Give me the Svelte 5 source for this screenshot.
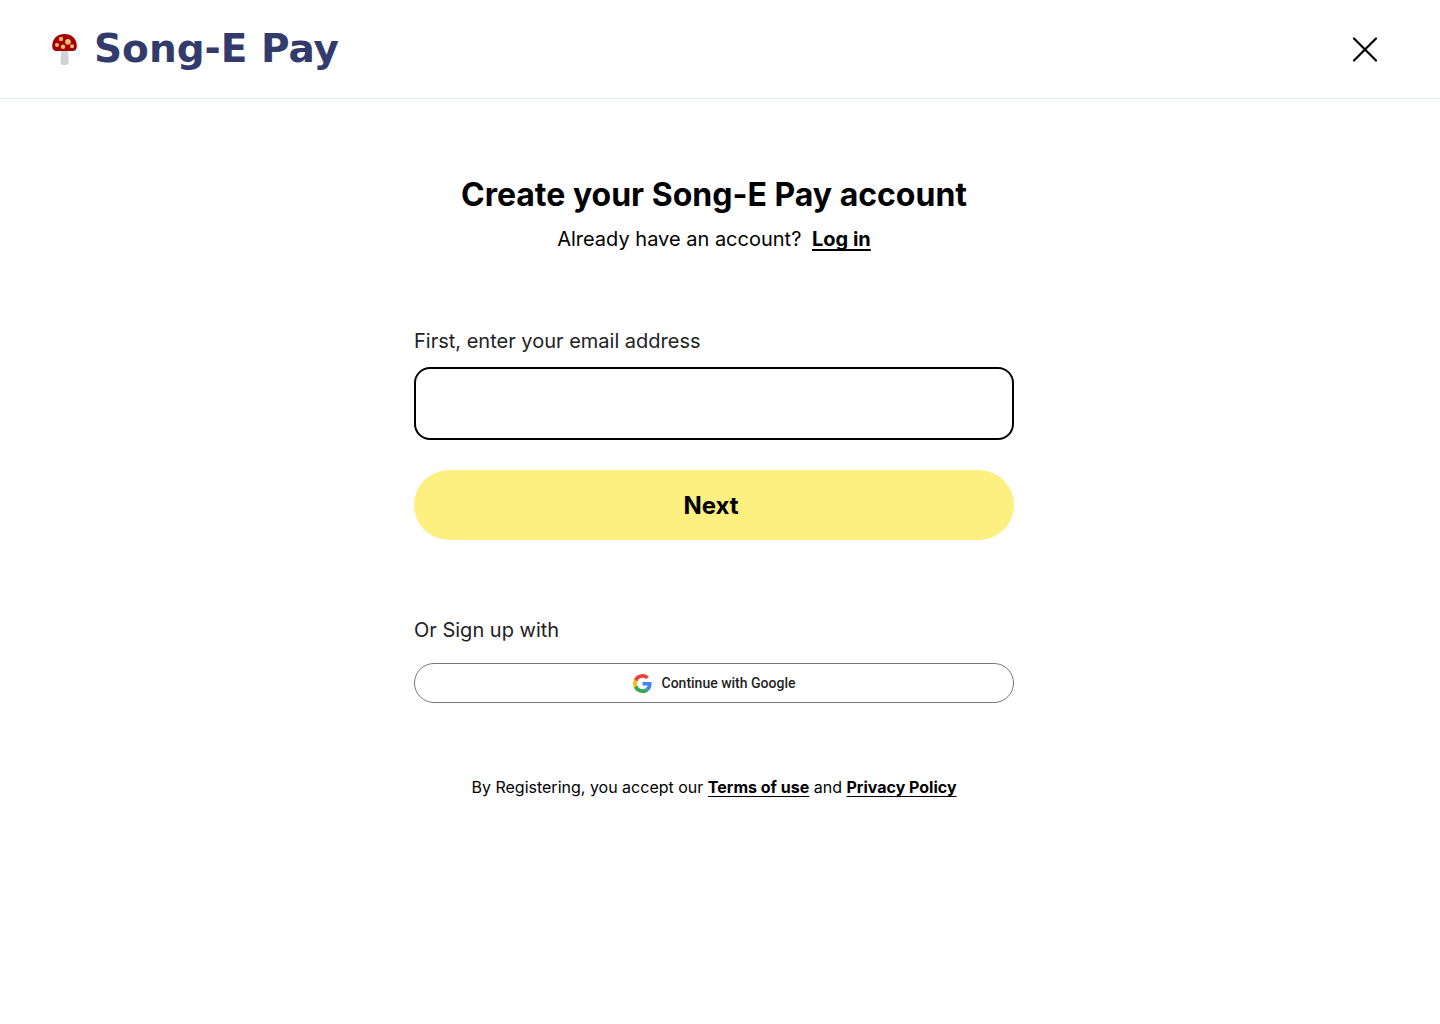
<script>
  let email = $state('');
</script>

<div class="page">
  <header>
    <a class="brand" href="#home">
      <svg class="mushroom" viewBox="0 0 26 34" aria-hidden="true">
        <path d="M9.500 17h6.200l1 12q.2 4-2.700 4h-2.800q-2.900 0-2.700-4z" fill="#d2d2d2" />
        <path d="M.2 14C.2 6.700 5.500 2 12.500 2s12.300 4.700 12.300 12c0 3-1.300 4.900-3.500 4.900H3.700C1.500 18.900.2 17 .2 14z" fill="#a30000" />
        <g fill="#ffb871">
          <circle cx="9" cy="7" r="2.200" /><circle cx="16" cy="9.800" r="2.900" />
          <circle cx="5" cy="13" r="2" /><circle cx="11" cy="14.800" r="2.200" />
          <circle cx="20" cy="14.200" r="2" />
        </g>
      </svg>
      <span>Song-E Pay</span>
    </a>
    <button class="close" type="button" aria-label="Close">
      <svg viewBox="0 0 26 26" aria-hidden="true"><path d="M2 2.500l22 22M24 2.500l-22 22" /></svg>
    </button>
  </header>

  <div class="content">
    <main>
      <h1>Create your Song-E Pay account</h1>
      <p class="login">Already have an account? <a href="#login">Log in</a></p>

      <form onsubmit={(event) => event.preventDefault()}>
        <label for="email">First, enter your email address</label>
        <input id="email" type="email" bind:value={email} />
        <button class="next" type="submit">Next</button>
      </form>

      <p class="alternative">Or Sign up with</p>
      <button class="google" type="button">
        <svg viewBox="0 0 48 48" aria-hidden="true">
          <path fill="#ea4335" d="M24 9.500c3.540 0 6.710 1.220 9.210 3.600l6.850-6.850C35.900 2.380 30.470 0 24 0 14.620 0 6.510 5.380 2.560 13.220l7.980 6.190C12.430 13.720 17.740 9.500 24 9.500z" />
          <path fill="#4285f4" d="M46.980 24.550c0-1.570-.15-3.090-.38-4.550H24v9.020h12.940c-.58 2.960-2.260 5.480-4.780 7.180l7.730 6c4.510-4.180 7.090-10.360 7.090-17.650z" />
          <path fill="#fbbc05" d="M10.530 28.590c-.48-1.450-.76-2.990-.76-4.590s.27-3.140.76-4.590l-7.980-6.190C.92 16.460 0 20.120 0 24s.92 7.540 2.560 10.780l7.970-6.190z" />
          <path fill="#34a853" d="M24 48c6.480 0 11.930-2.130 15.890-5.810l-7.730-6c-2.150 1.450-4.920 2.300-8.160 2.300-6.260 0-11.570-4.220-13.470-9.910l-7.980 6.190C6.510 42.620 14.620 48 24 48z" />
        </svg>
        <span>Continue with Google</span>
      </button>

      <p class="legal">By Registering, you accept our <a href="#terms">Terms of use</a> and <a href="#privacy">Privacy Policy</a></p>
    </main>
  </div>
</div>

<style>
  :global(body) { margin: 0; background: #fff; }
  .page { font-family: Inter, 'Liberation Sans', sans-serif; color: #000; }
  header {
    display: flex; align-items: center; justify-content: space-between;
    padding: 21px 62px 21px 52px; border-bottom: 1px solid #e1ebf1;
  }
  .brand {
    display: flex; align-items: center; gap: 16px; color: #323b6b;
    text-decoration: none; font: 700 39px/56px 'DejaVu Sans', sans-serif;
  }
  .mushroom { width: 26px; height: 34px; }
  button { font: inherit; color: inherit; cursor: pointer; padding: 0; }
  .close { display: flex; border: 0; background: none; }
  .close svg { width: 26px; height: 26px; fill: none; stroke: #000; stroke-width: 2.200; stroke-linecap: round; }
  .content { padding: 76px 12px 24px 0; }
  main { max-width: 600px; margin: 0 auto; }
  h1 { margin: 0; font-size: 32px; line-height: 40px; font-weight: 700; text-align: center; }
  p { margin: 0; }
  a { color: inherit; text-decoration-skip-ink: none; }
  .login { margin-top: 10px; font-size: 20px; line-height: 28px; text-align: center; }
  .login a { margin-left: 5px; text-underline-offset: 3px; }
  .login a, .legal a { font-weight: 700; }
  form { display: flex; flex-direction: column; margin-top: 74px; }
  label, .alternative { font-size: 20px; line-height: 28px; color: #222; }
  input {
    box-sizing: border-box; width: 100%; height: 73px; margin-top: 12px; padding: 0 20px;
    border: 2px solid #000; border-radius: 16px; background: #fff; font: 20px Inter, sans-serif; outline: none;
  }
  .next { height: 70px; margin-top: 30px; padding-right: 6px; border: 0; border-radius: 35px; background: #fdef80; font-size: 24px; font-weight: 700; }
  .alternative { margin-top: 76px; }
  .google {
    display: flex; align-items: center; justify-content: center; gap: 10px;
    width: 100%; height: 40px; margin-top: 19px; border: 1px solid #747775; border-radius: 20px;
    background: #fff; color: #1f1f1f; font: 500 14px/20px Roboto, sans-serif;
  }
  .google svg { width: 19px; height: 19px; }
  .legal { margin-top: 72px; font-size: 16px; line-height: 24px; text-align: center; }
  .legal a { text-underline-offset: 3px; }
</style>
